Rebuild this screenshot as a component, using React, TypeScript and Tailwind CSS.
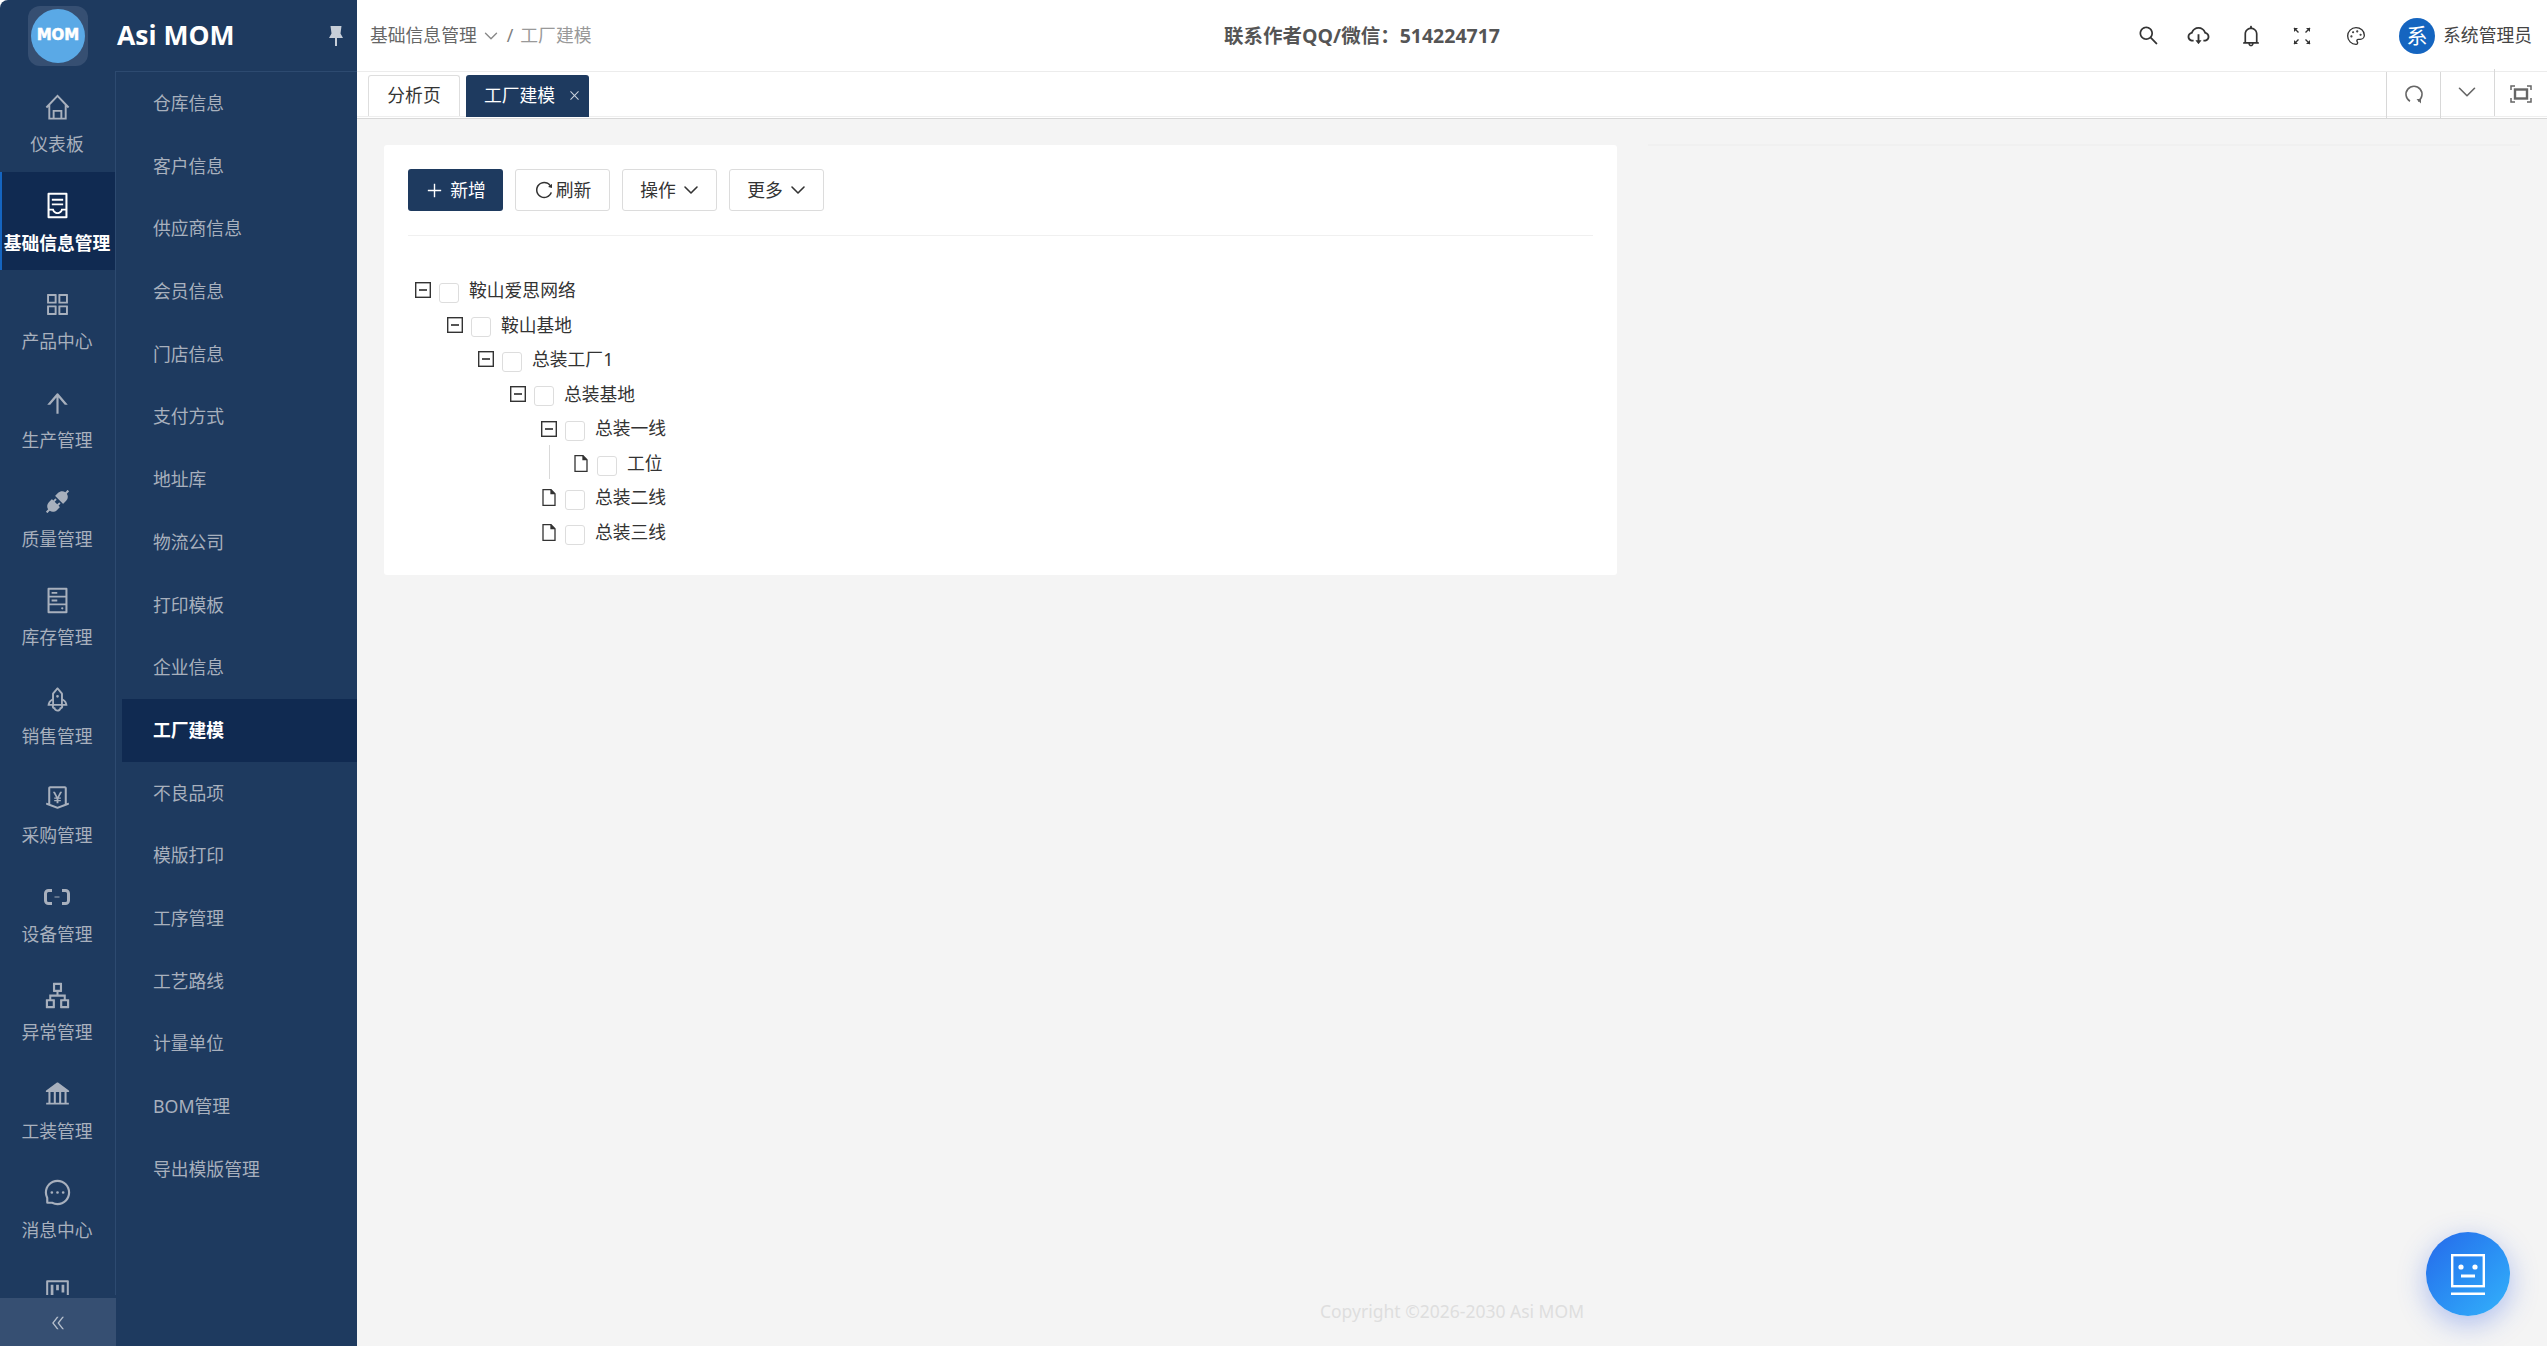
import React from 'react';
import {
  AiOutlineContainer, AiOutlineAppstore, AiOutlineArrowUp, AiFillApi, AiOutlineHdd, AiOutlineRocket,
  AiOutlineMoneyCollect, AiOutlineApartment, AiFillBank, AiOutlineMessage, AiOutlineProject, AiOutlineDoubleLeft,
  AiOutlineClose, AiOutlinePlus, AiOutlineReload, AiOutlineSearch, AiOutlineCloudDownload, AiOutlineBell,
} from 'react-icons/ai';
import { ChevronDown, Palette } from 'lucide-react';

const HomeIcon = ({ className }: { className?: string }) => (
  <svg viewBox="0 0 28 28" className={className} fill="none" stroke="currentColor" strokeWidth="2">
    <path d="M2.500 14L14 2l11.500 12M5.500 11v14.500h17V11" />
    <path d="M10 25.500V17.500h8v8" />
  </svg>
);

const DeviceIcon = ({ className }: { className?: string }) => (
  <svg viewBox="0 0 26 16" className={className} fill="none" stroke="currentColor" strokeWidth="3">
    <path d="M8 1.500H4.500a3 3 0 0 0-3 3v7a3 3 0 0 0 3 3H8M18 1.500h3.500a3 3 0 0 1 3 3v7a3 3 0 0 1-3 3H18" />
    <path d="M10.500 8h5" strokeWidth="1.600" opacity="0.6" />
  </svg>
);

const PinIcon = () => (
  <svg viewBox="0 0 14 20" className="w-[14px] h-[20px] text-[#c7ced8]" fill="currentColor">
    <path d="M1.500 0h11l-1 7.500L14 12H8v8H6v-8H0l2.500-4.500z" />
  </svg>
);

const ExpandArrows = () => (
  <svg viewBox="0 0 18 18" className="w-[18px] h-[18px] text-[#333]" fill="none" stroke="currentColor" strokeWidth="1.400">
    <path d="M1 1l4.500 4.500M17 1l-4.500 4.500M1 17l4.500-4.500M17 17l-4.500-4.500" />
    <path d="M1 1h4L1 5zM17 1h-4l4 4zM1 17h4l-4-4zM17 17h-4l4-4z" fill="currentColor" stroke="none" />
  </svg>
);

const RefreshArc = () => (
  <svg viewBox="0 0 20 20" className="w-[20px] h-[20px]" fill="none" stroke="currentColor" strokeWidth="1.600">
    <path d="M6 17.200A8 8 0 1 1 14 17.200" />
    <path d="M12.500 15h4.500v4.500z" fill="currentColor" stroke="none" />
  </svg>
);

const FrameIcon = () => (
  <svg viewBox="0 0 22 18" className="w-[22px] h-[18px]" fill="none" stroke="currentColor" strokeWidth="1.500">
    <path d="M1 5V1h4M17 1h4v4M21 13v4h-4M5 17H1v-4" />
    <rect x="5" y="4.500" width="12" height="9" strokeWidth="2.400" />
  </svg>
);

const MinusBox = () => (
  <svg viewBox="0 0 16 16" className="w-[16px] h-[16px] shrink-0" fill="none">
    <rect x="0.700" y="0.700" width="14.600" height="14.600" stroke="#333" strokeWidth="1.400" />
    <path d="M4 8h8" stroke="#555" strokeWidth="2" />
  </svg>
);

const FileBox = () => (
  <svg viewBox="0 0 14 17" className="w-[14px] h-[17px] ml-px shrink-0" fill="none" stroke="#333" strokeWidth="1.300">
    <path d="M1 .700h8l4 4v11.600H1z" />
    <path d="M9 .700v4h4" fill="#333" />
  </svg>
);

const railItems = [
  { icon: HomeIcon, label: '仪表板' },
  { icon: AiOutlineContainer, label: '基础信息管理', active: true },
  { icon: AiOutlineAppstore, label: '产品中心' },
  { icon: AiOutlineArrowUp, label: '生产管理' },
  { icon: AiFillApi, label: '质量管理' },
  { icon: AiOutlineHdd, label: '库存管理' },
  { icon: AiOutlineRocket, label: '销售管理' },
  { icon: AiOutlineMoneyCollect, label: '采购管理' },
  { icon: DeviceIcon, label: '设备管理' },
  { icon: AiOutlineApartment, label: '异常管理' },
  { icon: AiFillBank, label: '工装管理' },
  { icon: AiOutlineMessage, label: '消息中心' },
  { icon: AiOutlineProject },
];

const subItems = ['仓库信息', '客户信息', '供应商信息', '会员信息', '门店信息', '支付方式', '地址库', '物流公司', '打印模板', '企业信息', '工厂建模', '不良品项', '模版打印', '工序管理', '工艺路线', '计量单位', 'BOM管理', '导出模版管理'];

const treeRows = [
  { level: 0, label: '鞍山爱思网络', parent: true },
  { level: 1, label: '鞍山基地', parent: true },
  { level: 2, label: '总装工厂1', parent: true },
  { level: 3, label: '总装基地', parent: true },
  { level: 4, label: '总装一线', parent: true },
  { level: 5, label: '工位', line: true },
  { level: 4, label: '总装二线' },
  { level: 4, label: '总装三线' },
];

const indentClass = ['pl-0', 'pl-[32px]', 'pl-[63px]', 'pl-[95px]', 'pl-[126px]', 'pl-[158px]'];

const Sidebar = () => (
  <aside className="w-[357px] h-full shrink-0 bg-[#1e3a5f] flex flex-col">
    <div className="h-[71px] shrink-0 flex items-center">
      <div className="w-[116px] flex justify-center">
        <div className="w-[60px] h-[60px] rounded-[12px] bg-[#364f72] flex items-center justify-center">
          <div className="w-[54px] h-[54px] rounded-full bg-[#5aa9e6] flex items-center justify-center">
            <span className="text-white font-bold text-[15px] [-webkit-text-stroke:0.5px_white] [font-family:'DejaVu_Sans',sans-serif]">MOM</span>
          </div>
        </div>
      </div>
      <span className="text-white font-bold text-[26.500px] leading-none ml-[1px] [font-family:'Open_Sans',sans-serif]">Asi MOM</span>
      <span className="ml-auto mr-[14px]"><PinIcon /></span>
    </div>
    <div className="flex-1 min-h-0 flex">
      <div className="w-[116px] shrink-0 flex flex-col">
        <nav className="h-[1224px] overflow-hidden border-r border-[#2d4a70] pt-[2px]">
          {railItems.map((item, i) => (
            <div key={i} className={`h-[98.700px] pt-[20px] pr-[1px] flex flex-col items-center ${item.active ? 'bg-[#102a51] shadow-[inset_2px_0_0_#1565c0] text-white font-bold' : 'text-[#a8b0bd]'}`}>
              <div className="h-[28px] flex items-center justify-center">
                <item.icon className={item.icon === DeviceIcon ? 'w-[26px] h-[16px]' : item.icon === HomeIcon ? 'w-[27px] h-[27px]' : 'w-[29px] h-[29px]'} />
              </div>
              {item.label && <span className="mt-[10px] text-[17.800px] leading-[26px] whitespace-nowrap">{item.label}</span>}
            </div>
          ))}
        </nav>
        <div className="mt-[3px] h-[48px] pt-[2px] bg-[#364f72] flex items-center justify-center text-[#b6bfcc]">
          <AiOutlineDoubleLeft className="w-[18px] h-[18px]" />
        </div>
      </div>
      <div className="flex-1 border-t border-[#2d4a70]">
        <div className="pl-[6px]">
          {subItems.map(item => (
            <div key={item} className={`h-[62.700px] pl-[31px] flex items-center text-[17.800px] ${item === '工厂建模' ? 'bg-[#102a51] text-white font-bold' : 'text-[#a8b0bd]'}`}>
              {item}
            </div>
          ))}
        </div>
      </div>
    </div>
  </aside>
);

const Header = () => (
  <header className="h-[72px] shrink-0 bg-white border-b-[1.500px] border-[#ececec] flex items-center pl-[13px] pr-[15px]">
    <div className="flex items-center text-[17.800px] text-[#808080]">
      <span className="text-[#666]">基础信息管理</span>
      <ChevronDown className="w-[22px] h-[22px] ml-[3px] -mr-[2px] text-[#888]" strokeWidth={1.500} />
      <span className="mx-[7px]">/</span>
      <span className="text-[#999]">工厂建模</span>
    </div>
    <div className="flex-1 flex justify-center pr-[4px]">
      <span className="text-[19.500px] font-bold text-[#555] [font-family:'Open_Sans','Noto_Sans_CJK_SC',sans-serif]">联系作者QQ/微信：514224717</span>
    </div>
    <div className="flex items-center text-[#333]">
      <AiOutlineSearch className="w-[23px] h-[23px] mr-[26px]" />
      <AiOutlineCloudDownload className="w-[25px] h-[25px] mr-[28px]" />
      <AiOutlineBell className="w-[24px] h-[24px] mr-[30px]" />
      <ExpandArrows />
      <Palette className="w-[20px] h-[20px] ml-[35px] mr-[33.500px]" strokeWidth={1.600} />
      <div className="w-[36px] h-[36px] rounded-full bg-[#1565c0] flex items-center justify-center text-white text-[21px] mr-[8px]">系</div>
      <span className="text-[17.800px] text-[#444]">系统管理员</span>
    </div>
  </header>
);

const TabBar = () => (
  <div className="h-[47px] shrink-0 bg-white flex flex-col border-b-[1.500px] border-[#d8d8d8]">
    <div className="h-[44.500px] flex border-b border-[#eeeeee] pl-[11px]">
      <div className="flex gap-[6px] pt-[3px] items-end">
        <div className="w-[92px] h-[41px] flex items-center justify-center border border-b-0 border-[#dedede] rounded-t-[3px] text-[17.800px] text-[#333]">分析页</div>
        <div className="w-[123px] h-[42px] -mb-px flex items-center pl-[18px] bg-[#1e3a5f] rounded-t-[3px] text-[17.800px] text-white">
          工厂建模
          <AiOutlineClose className="w-[13px] h-[13px] ml-[13px] text-[#c9d1dc]" />
        </div>
      </div>
      <div className="ml-auto flex text-[#666]">
        <div className="w-[54px] h-[47px] pb-[3px] flex items-center justify-center border-l border-[#d8d8d8]"><RefreshArc /></div>
        <div className="w-[54px] h-[47px] pb-[3px] pr-[1px] flex items-center justify-center border-l border-[#d8d8d8]"><ChevronDown className="w-[30px] h-[30px] -mt-[4px]" strokeWidth={1.300} /></div>
        <div className="w-[53px] h-[47px] flex items-center justify-center border-l border-[#d8d8d8] -mt-[3px] pt-[3px]"><FrameIcon /></div>
      </div>
    </div>
  </div>
);

const ToolButton = ({ children, primary }: { children: React.ReactNode; primary?: boolean }) => (
  <button className={`h-[42px] w-[95px] rounded-[3px] flex items-center justify-center text-[17.800px] ${primary ? 'bg-[#1e3a5f] text-white' : 'bg-white border border-[#dcdcdc] text-[#333]'}`}>
    {children}
  </button>
);

const FactoryCard = () => (
  <div className="w-[1233px] h-[430px] bg-white rounded-[3px] px-[24px] pt-[24px]">
    <div className="flex gap-[12px] pb-[24px] border-b border-[#f0f0f0]">
      <ToolButton primary><AiOutlinePlus className="w-[19px] h-[19px] mr-[6px]" />新增</ToolButton>
      <ToolButton><AiOutlineReload className="w-[20px] h-[20px] mr-[2px]" />刷新</ToolButton>
      <ToolButton>操作<ChevronDown className="w-[24px] h-[24px] ml-[3px] -mr-[4px]" strokeWidth={1.600} /></ToolButton>
      <ToolButton>更多<ChevronDown className="w-[24px] h-[24px] ml-[3px] -mr-[4px]" strokeWidth={1.600} /></ToolButton>
    </div>
    <div className="pt-[37px] pl-[7px]">
      {treeRows.map(row => (
        <div key={row.label} className={`h-[34.570px] flex items-center relative ${indentClass[row.level]}`}>
          {row.line && <span className="absolute left-[134px] -top-[1px] h-[34px] border-l border-[#d9d9d9]" />}
          {row.parent ? <MinusBox /> : <FileBox />}
          <span className={`w-[20px] h-[20px] mt-[5px] border border-[#dddddd] rounded-[3px] bg-white shrink-0 ${row.parent ? 'ml-[8px]' : 'ml-[9px]'}`} />
          <span className="ml-[10px] text-[17.800px] text-[#333] whitespace-nowrap">{row.label}</span>
        </div>
      ))}
    </div>
  </div>
);

const AiButton = () => (
  <button className="absolute right-[37px] bottom-[30px] w-[84px] h-[84px] rounded-full bg-gradient-to-br from-[#2768ea] to-[#35b2fb] shadow-[0_8px_28px_rgba(40,90,230,0.35)] flex items-center justify-center">
    <svg viewBox="0 0 34 41" className="w-[34px] h-[41px]" fill="none" stroke="white" strokeWidth="2.400">
      <rect x="1.200" y="1.200" width="31.600" height="31" />
      <circle cx="10" cy="13" r="2.600" fill="white" stroke="none" />
      <circle cx="24" cy="13" r="2.600" fill="white" stroke="none" />
      <path d="M10 22h14" strokeWidth="3" />
      <path d="M0 40h34" strokeWidth="3" />
    </svg>
  </button>
);

export default function App() {
  return (
    <div className="w-[2547px] h-[1346px] overflow-hidden rounded-t-[8px] flex bg-white [font-family:'Noto_Sans','Noto_Sans_CJK_SC',sans-serif]">
      <Sidebar />
      <main className="flex-1 min-w-0 flex flex-col relative">
        <Header />
        <TabBar />
        <div className="flex-1 bg-[#f4f4f4] px-[27px] pt-[26px] flex gap-[31px]">
          <FactoryCard />
          <div className="flex-1 h-[2px] -mt-[1px] bg-[#f0f0f0]" />
        </div>
        <footer className="absolute left-0 right-0 bottom-[22px] text-center text-[17.500px] text-[#dedede]">Copyright ©2026-2030 Asi MOM</footer>
        <AiButton />
      </main>
    </div>
  );
}
